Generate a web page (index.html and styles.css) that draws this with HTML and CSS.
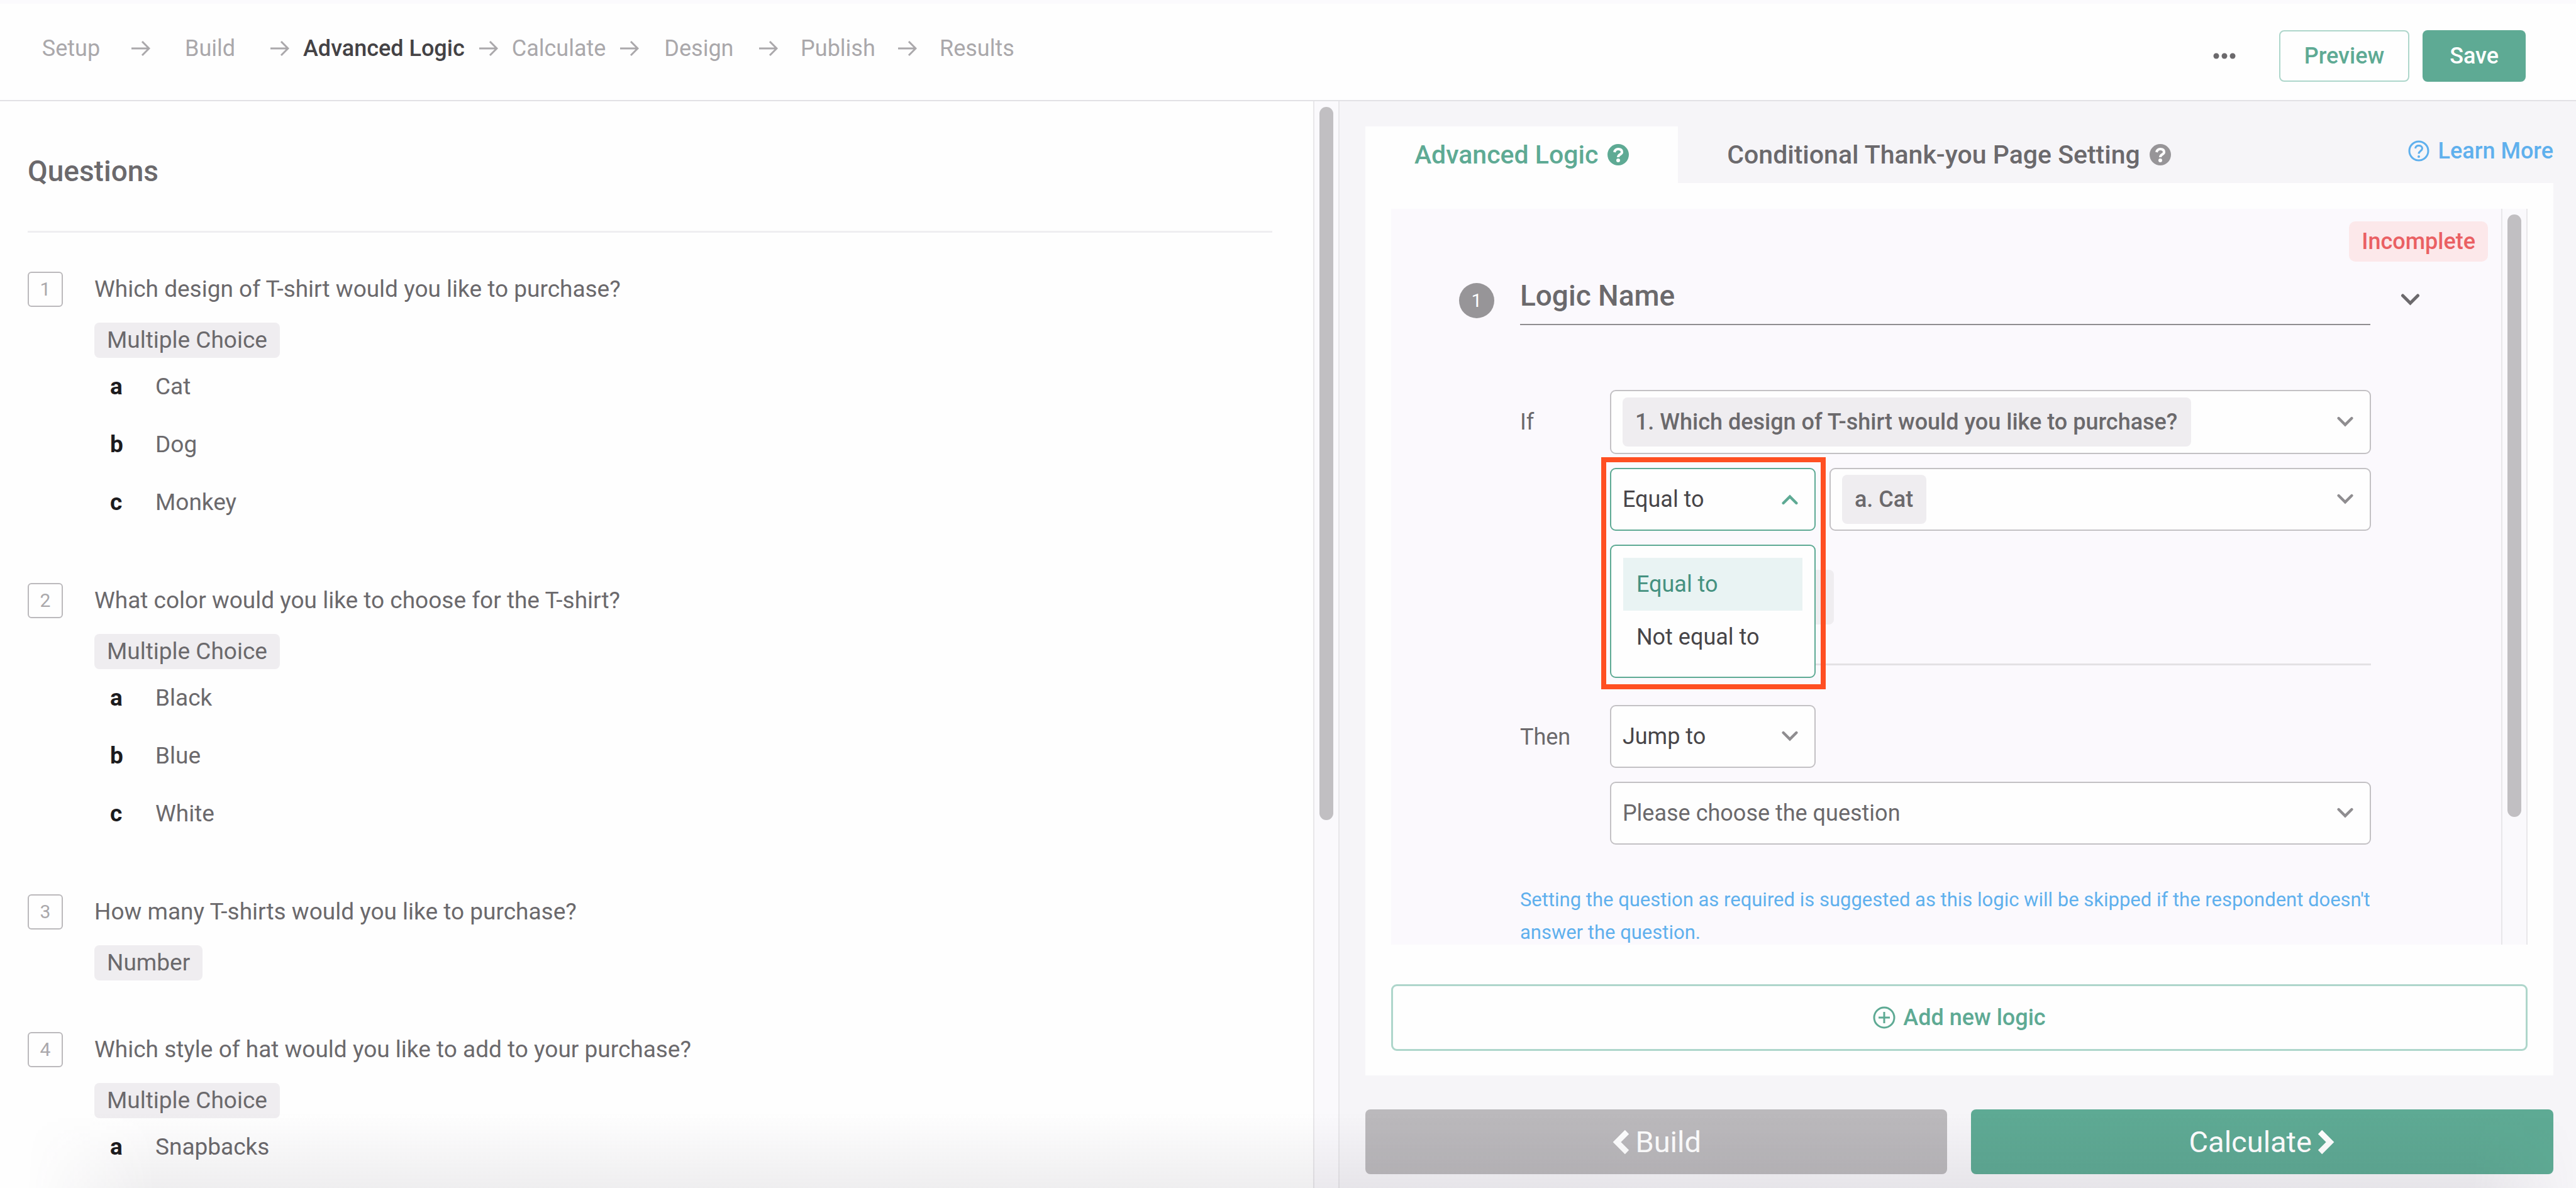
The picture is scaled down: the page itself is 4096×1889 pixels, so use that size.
FILE: index.html
```html
<!DOCTYPE html>
<html lang="en">
<head>
    <meta charset="UTF-8">
    <title>Advanced Logic</title>
    <link rel="stylesheet" href="styles.css">
</head>
<body>
    <svg class="sprite" aria-hidden="true">
        <symbol id="arrow" viewBox="0 0 31 28"><path d="M1 14H29M18 3L29 14L18 25" fill="none" stroke="currentColor" stroke-width="3"/></symbol>
        <symbol id="chevron" viewBox="0 0 30 20"><path d="M3 3L15 15L27 3" fill="none" stroke="currentColor" stroke-width="5" stroke-linecap="round"/></symbol>
        <symbol id="question" viewBox="0 0 34 34"><circle cx="17" cy="17" r="17" fill="currentColor"/><path d="M11 13C12 9 14 8 17 8C21 8 23 10 23 13C23 17 17 16 17 21" fill="none" stroke="#fff" stroke-width="4"/><circle cx="17" cy="26" r="3" fill="#fff"/></symbol>
        <symbol id="question-outline" viewBox="0 0 34 34"><circle cx="17" cy="17" r="15" fill="none" stroke="currentColor" stroke-width="3"/><path d="M11.500 13C12 10 14 8.500 17 8.500C20 8.500 22.500 10 22.500 13C22.500 17 17 17 17 21.500" fill="none" stroke="currentColor" stroke-width="3"/><circle cx="17" cy="26" r="2" fill="currentColor"/></symbol>
        <symbol id="plus" viewBox="0 0 36 36"><circle cx="18" cy="18" r="16" fill="none" stroke="currentColor" stroke-width="3"/><path d="M18 9V27M9 18H27" stroke="currentColor" stroke-width="3"/></symbol>
        <symbol id="angle" viewBox="0 0 30 42"><path d="M25 5L9 21L25 37" fill="none" stroke="currentColor" stroke-width="9"/></symbol>
    </svg>

    <header class="header">
        <nav class="steps">
            <a href="#" class="step">Setup</a>
            <svg class="step-arrow"><use href="#arrow"/></svg>
            <a href="#" class="step">Build</a>
            <svg class="step-arrow"><use href="#arrow"/></svg>
            <a href="#" class="step active">Advanced Logic</a>
            <svg class="step-arrow"><use href="#arrow"/></svg>
            <a href="#" class="step">Calculate</a>
            <svg class="step-arrow"><use href="#arrow"/></svg>
            <a href="#" class="step">Design</a>
            <svg class="step-arrow"><use href="#arrow"/></svg>
            <a href="#" class="step">Publish</a>
            <svg class="step-arrow"><use href="#arrow"/></svg>
            <a href="#" class="step">Results</a>
        </nav>
        <div class="actions">
            <button class="more" aria-label="More">
                <svg viewBox="0 0 36 10"><circle cx="5" cy="5" r="4.500"/><circle cx="18" cy="5" r="4.500"/><circle cx="31" cy="5" r="4.500"/></svg>
            </button>
            <button class="btn btn-outline">Preview</button>
            <button class="btn btn-green">Save</button>
        </div>
    </header>

    <main class="main">
        <section class="left">
            <div class="questions">
                <h2>Questions</h2>
                <hr>
                <div class="question">
                    <span class="number">1</span>
                    <div class="question-body">
                        <p>Which design of T-shirt would you like to purchase?</p>
                        <span class="type">Multiple Choice</span>
                        <ul class="options">
                            <li><b>a</b>Cat</li>
                            <li><b>b</b>Dog</li>
                            <li><b>c</b>Monkey</li>
                        </ul>
                    </div>
                </div>
                <div class="question">
                    <span class="number">2</span>
                    <div class="question-body">
                        <p>What color would you like to choose for the T-shirt?</p>
                        <span class="type">Multiple Choice</span>
                        <ul class="options">
                            <li><b>a</b>Black</li>
                            <li><b>b</b>Blue</li>
                            <li><b>c</b>White</li>
                        </ul>
                    </div>
                </div>
                <div class="question">
                    <span class="number">3</span>
                    <div class="question-body">
                        <p>How many T-shirts would you like to purchase?</p>
                        <span class="type">Number</span>
                    </div>
                </div>
                <div class="question">
                    <span class="number">4</span>
                    <div class="question-body">
                        <p>Which style of hat would you like to add to your purchase?</p>
                        <span class="type">Multiple Choice</span>
                        <ul class="options">
                            <li><b>a</b>Snapbacks</li>
                        </ul>
                    </div>
                </div>
            </div>
            <div class="track"><div class="thumb thumb-left"></div></div>
        </section>

        <section class="right">
            <div class="tabs">
                <a href="#" class="tab active">Advanced Logic <svg class="help"><use href="#question"/></svg></a>
                <a href="#" class="tab">Conditional Thank-you Page Setting <svg class="help"><use href="#question"/></svg></a>
                <a href="#" class="learn"><svg class="help"><use href="#question-outline"/></svg> Learn More</a>
            </div>
            <div class="card">
                <div class="scroll">
                    <div class="logic">
                        <div class="status-row"><span class="status">Incomplete</span></div>
                        <div class="logic-head">
                            <span class="circle">1</span>
                            <input class="logic-name" type="text" value="Logic Name" aria-label="Logic name">
                            <button class="toggle" aria-label="Collapse"><svg><use href="#chevron"/></svg></button>
                        </div>
                        <div class="logic-body">
                            <div class="row">
                                <label for="question">If</label>
                                <div class="controls">
                                    <div class="select tall">
                                        <select id="question" class="chip"><option>1. Which design of T-shirt would you like to purchase?</option></select>
                                        <svg><use href="#chevron"/></svg>
                                    </div>
                                    <div class="pair">
                                        <div class="select small open">
                                            <select aria-label="Condition"><option>Equal to</option><option>Not equal to</option></select>
                                            <svg><use href="#chevron"/></svg>
                                            <ul class="menu">
                                                <li class="selected">Equal to</li>
                                                <li>Not equal to</li>
                                            </ul>
                                            <div class="highlight"></div>
                                        </div>
                                        <div class="select">
                                            <select class="chip" aria-label="Answer"><option>a. Cat</option></select>
                                            <svg><use href="#chevron"/></svg>
                                        </div>
                                    </div>
                                    <button class="add-condition" aria-label="Add condition"></button>
                                    <hr>
                                </div>
                            </div>
                            <div class="row">
                                <label for="action">Then</label>
                                <div class="controls">
                                    <div class="select small">
                                        <select id="action"><option>Jump to</option></select>
                                        <svg><use href="#chevron"/></svg>
                                    </div>
                                    <div class="select">
                                        <select class="placeholder" aria-label="Target question"><option>Please choose the question</option></select>
                                        <svg><use href="#chevron"/></svg>
                                    </div>
                                </div>
                            </div>
                            <p class="note">Setting the question as required is suggested as this logic will be skipped if the respondent doesn't answer the question.</p>
                        </div>
                    </div>
                    <div class="track"><div class="thumb thumb-logic"></div></div>
                </div>
                <button class="add-logic"><svg><use href="#plus"/></svg>Add new logic</button>
            </div>
            <div class="footer">
                <button class="nav-btn back"><svg><use href="#angle"/></svg>Build</button>
                <button class="nav-btn next">Calculate<svg><use href="#angle"/></svg></button>
            </div>
        </section>
    </main>
    <div class="fade"></div>
</body>
</html>
```
FILE: styles.css
```css
:root {
    --green: #5eaa94;
    --text: #6b696c;
    --dark: #474548;
    --blue: #5fb0ed;
    --chip: #efedf0;
}

* {
    box-sizing: border-box;
}

body {
    margin: 0;
    height: 100vh;
    display: flex;
    flex-direction: column;
    overflow: hidden;
    background: #fefefe;
    color: var(--text);
    font-family: Roboto, "Liberation Sans", sans-serif;
    font-size: 36px;
}

a {
    text-decoration: none;
    color: inherit;
}

button, input, select {
    font: inherit;
    color: inherit;
    border: 0;
    background: none;
    padding: 0;
    margin: 0;
}

ul, p, h2 {
    margin: 0;
    padding: 0;
    list-style: none;
}

hr {
    border: 0;
    height: 3px;
    margin: 0;
    background: #efeef1;
}

.sprite {
    position: absolute;
    width: 0;
    height: 0;
}

/* header */
.header {
    height: 161px;
    flex: none;
    display: flex;
    justify-content: space-between;
    border-top: 6px solid #fbfafd;
    border-bottom: 2px solid #e2e1e5;
    padding: 42px 80px 0 18px;
}

.steps {
    display: flex;
    align-items: center;
    height: 58px;
    color: #aaa8ab;
}

.step {
    min-width: 190px;
    padding: 0 22px;
    text-align: center;
}

.step.active {
    color: #444245;
    font-weight: 500;
}

.step-arrow {
    width: 31px;
    height: 28px;
}

.actions {
    display: flex;
    height: 82px;
    gap: 21px;
}

.more {
    width: 80px;
    margin-right: 4px;
    fill: #6b696c;
}

.more svg {
    width: 36px;
    height: 10px;
    display: block;
}

.btn {
    padding: 0 38px;
    border-radius: 8px;
    font-weight: 500;
}

.btn-outline {
    color: var(--green);
    border: 2px solid #aed6cb;
}

.btn-green {
    padding: 0 43px;
    color: #fff;
    background: var(--green);
}

/* layout */
.main {
    flex: 1;
    min-height: 0;
    display: flex;
}

.left {
    width: 52%;
    display: flex;
}

.questions {
    flex: 1;
    padding: 80px 65px 0 44px;
    font-size: 37px;
}

.questions h2 {
    font-size: 46px;
    line-height: 62px;
    font-weight: 500;
    margin-bottom: 64px;
}

.question {
    display: flex;
    gap: 50px;
    margin-top: 82px;
}

.questions hr + .question {
    margin-top: 62px;
}

.number {
    width: 56px;
    height: 56px;
    border: 2px solid #bbb9bc;
    border-radius: 6px;
    color: #aaa8ab;
    font-size: 30px;
    line-height: 52px;
    text-align: center;
}

.question p {
    line-height: 56px;
    margin-bottom: 25px;
}

.type {
    display: block;
    width: fit-content;
    line-height: 56px;
    padding: 0 20px;
    border-radius: 8px;
    background: var(--chip);
}

.options li {
    display: flex;
    line-height: 92px;
    padding-left: 25px;
}

.options b {
    width: 72px;
    color: #1c1b1d;
}

.track {
    width: 42px;
    flex: none;
    padding: 9px 8px;
    border: 2px solid #e8e7ea;
    border-width: 0 2px;
    background: #faf9fc;
}

.thumb {
    border-radius: 12px;
    background: #c1bfc2;
}

.thumb-left {
    height: 66.3%;
}

.thumb-logic {
    height: 83.2%;
}

.right {
    flex: 1;
    display: flex;
    flex-direction: column;
    padding: 40px 36px 22px 41px;
    background: #f6f5f8;
}

/* tabs */
.tabs {
    display: flex;
    height: 90px;
    font-weight: 500;
}

.tab {
    display: flex;
    align-items: center;
    gap: 15px;
    padding: 0 78px;
    font-size: 41px;
}

.tab.active {
    color: var(--green);
    background: #fefefe;
}

.help {
    width: 34px;
    height: 34px;
}

.tab:not(.active) .help {
    color: #979598;
}

.learn {
    display: flex;
    align-items: center;
    gap: 14px;
    height: 78px;
    margin-left: auto;
    color: var(--blue);
}

.card {
    flex: 1;
    min-height: 0;
    display: flex;
    flex-direction: column;
    gap: 63px;
    padding: 41px 41px 39px;
    background: #fefefe;
}

.scroll {
    flex: 1;
    min-height: 0;
    display: flex;
    overflow: hidden;
    background: #fbf9fd;
}

.logic {
    flex: 1;
}

.status-row {
    display: flex;
    justify-content: flex-end;
    padding: 20px 21px 0 0;
}

.status {
    line-height: 64px;
    padding: 0 20px;
    border-radius: 10px;
    color: #ea6063;
    background: #fce8ea;
    font-weight: 500;
}

.logic-head {
    display: flex;
    align-items: flex-start;
    margin-top: 8px;
    padding: 0 129px 0 108px;
}

.circle {
    width: 56px;
    height: 56px;
    margin: 26px 41px 0 0;
    border-radius: 50%;
    color: #fff;
    background: #979598;
    font-size: 30px;
    line-height: 56px;
    text-align: center;
}

.logic-name {
    flex: 1;
    height: 93px;
    border-bottom: 2px solid #8f8d90;
    font-size: 46px;
    font-weight: 500;
}

.toggle {
    margin: 43px 0 0 48px;
}

.toggle svg {
    display: block;
    width: 31px;
    height: 20px;
}

.logic-body {
    padding: 103px 207px 0 205px;
}

.row {
    display: flex;
}

.row label {
    width: 143px;
    line-height: 102px;
}

.controls {
    flex: 1;
    display: flex;
    flex-direction: column;
    gap: 22px;
}

.controls hr {
    margin: 40px 0 63px;
    background: #e3e1e4;
}

.pair {
    display: flex;
    gap: 22px;
}

.select {
    position: relative;
    flex: 1;
    display: flex;
    align-items: center;
    justify-content: space-between;
    min-height: 100px;
    padding: 0 26px 0 18px;
    border: 2px solid #c3c1c4;
    border-radius: 9px;
    background: #fefefe;
}

.select.tall {
    min-height: 102px;
}

.select.small {
    flex: none;
    width: 327px;
}

.select select {
    appearance: none;
    flex: 1;
    color: var(--dark);
}

.select .chip {
    flex: none;
    height: 78px;
    padding: 0 20px;
    border-radius: 8px;
    color: var(--text);
    background: var(--chip);
    font-weight: 500;
}

.select .placeholder {
    color: var(--text);
}

.select svg {
    width: 26px;
    height: 18px;
    color: #8f8d90;
}

.select.open {
    border-color: var(--green);
}

.select.open svg {
    color: var(--green);
    transform: rotate(180deg);
}

.menu {
    position: absolute;
    z-index: 1;
    top: 120px;
    left: -2px;
    right: -2px;
    padding: 19px 19px 21px;
    border: 2px solid var(--green);
    border-radius: 9px;
    background: #fefefe;
}

.menu li {
    padding: 0 21px;
    color: var(--dark);
    line-height: 84px;
}

.menu .selected {
    color: #459180;
    background: #e9f3f3;
}

.highlight {
    position: absolute;
    z-index: 2;
    top: -19px;
    left: -16px;
    right: -18px;
    height: 369px;
    border: 8px solid #ff4f22;
}

.add-condition {
    width: 356px;
    height: 87px;
    margin-top: 40px;
    border-radius: 8px;
    background: var(--chip);
}

.note {
    margin: 62px -20px 0 0;
    color: var(--blue);
    font-size: 31px;
    line-height: 52px;
}

.add-logic {
    display: flex;
    align-items: center;
    justify-content: center;
    gap: 12px;
    height: 106px;
    border: 3px solid #aed6cb;
    border-radius: 9px;
    color: var(--green);
    font-weight: 500;
}

.add-logic svg {
    width: 36px;
    height: 36px;
}

/* bottom buttons */
.footer {
    display: flex;
    gap: 38px;
    margin-top: 54px;
}

.nav-btn {
    flex: 1;
    display: flex;
    align-items: center;
    justify-content: center;
    gap: 8px;
    height: 103px;
    border-radius: 8px;
    color: #fff;
    font-size: 47px;
}

.nav-btn svg {
    width: 30px;
    height: 42px;
}

.back {
    background: #bbb9bc;
}

.next {
    background: var(--green);
}

.next svg {
    transform: rotate(180deg);
}

.fade {
    position: absolute;
    left: 0;
    right: 0;
    bottom: 0;
    height: 120px;
    pointer-events: none;
    background: linear-gradient(to bottom, rgba(60, 50, 70, 0), rgba(60, 50, 70, 0.08));
    mask-image: linear-gradient(to right, transparent 1%, #000 6%, #000 96%, transparent);
}
```
